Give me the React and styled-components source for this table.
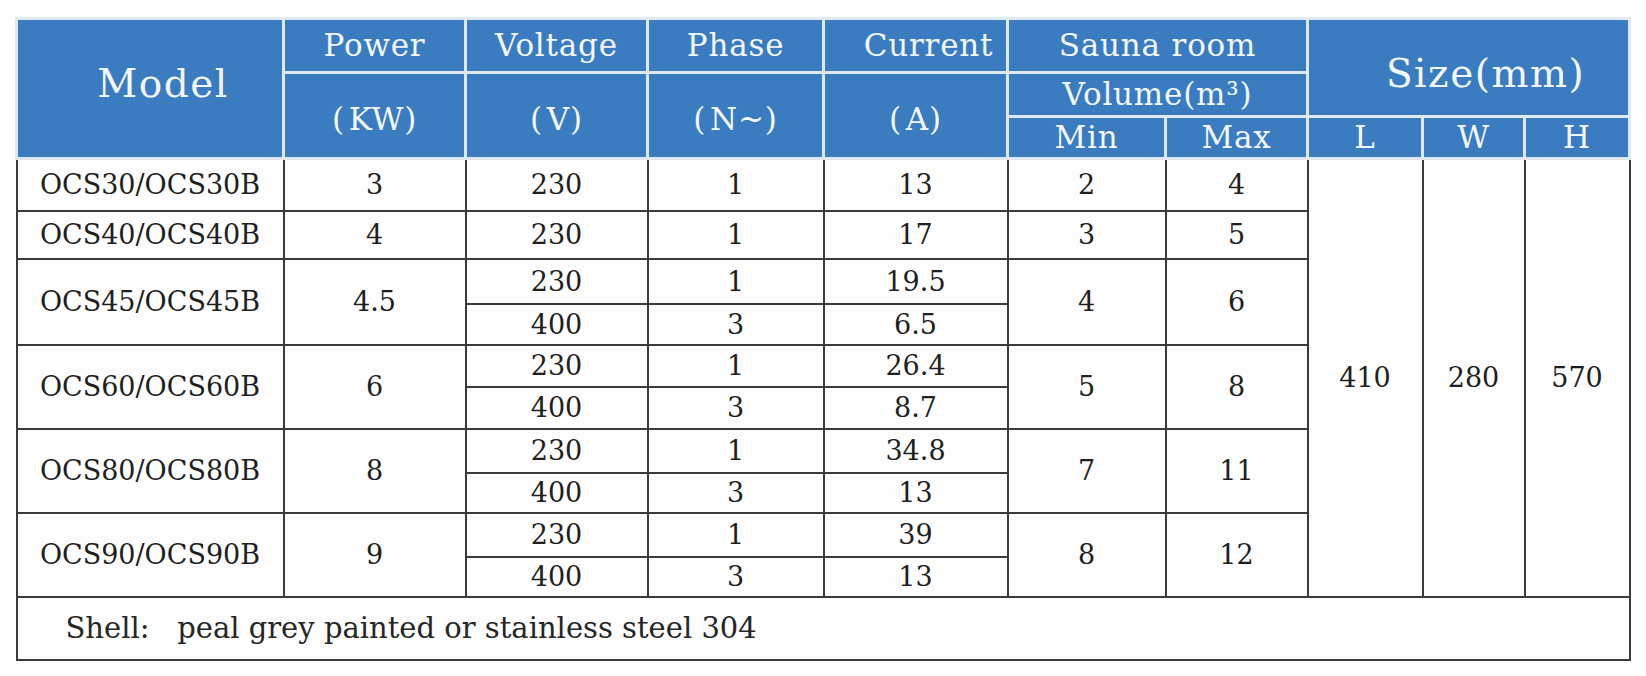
import React from 'react';
import styled, { createGlobalStyle } from 'styled-components';

const Global = createGlobalStyle`
  html, body { margin: 0; padding: 0; background: #ffffff; }
  body { font-family: "DejaVu Serif", "Liberation Serif", serif; }
`;

const Page = styled.main`
  padding: 17px 0 0 15px;
`;

const Table = styled.table`
  width: 1613px;
  table-layout: fixed;
  border-collapse: collapse;
  border: 2px solid #3d3d3d;
`;

const Col = styled.col`
  width: ${(p) => p.$w}px;
`;

const Row = styled.tr`
  height: ${(p) => p.$h}px;
`;

const Th = styled.th`
  background: #3b7bbf;
  color: #f2f7fc;
  border: 3px solid #dfe9f4;
  font-weight: normal;
  font-size: ${(p) => (p.$big ? 39 : 31)}px;
  letter-spacing: ${(p) => (p.$big ? 1.5 : 0.8)}px;
  line-height: 1;
  padding: ${(p) => p.$pad || '0'};
  text-align: center;
  white-space: nowrap;
`;

const Td = styled.td`
  border: 2px solid #3a3a3a;
  background: #fdfdfd;
  color: #1f1f1f;
  font-size: 27px;
  line-height: 1;
  padding: 0;
  text-align: center;
  white-space: nowrap;
`;

const NoteCell = styled.td`
  border: 2px solid #3a3a3a;
  background: #fdfdfd;
  color: #262626;
  font-size: 29px;
  line-height: 1;
  padding: 0 0 0 48px;
  text-align: left;
  white-space: pre;
`;

const widths = [267, 182, 182, 176, 184, 158, 142, 115, 102, 105];

const groups = [
  { model: 'OCS30/OCS30B', power: '3', lines: [['230', '1', '13']], min: '2', max: '4', h: [52] },
  { model: 'OCS40/OCS40B', power: '4', lines: [['230', '1', '17']], min: '3', max: '5', h: [48] },
  { model: 'OCS45/OCS45B', power: '4.5', lines: [['230', '1', '19.5'], ['400', '3', '6.5']], min: '4', max: '6', h: [45, 41] },
  { model: 'OCS60/OCS60B', power: '6', lines: [['230', '1', '26.4'], ['400', '3', '8.7']], min: '5', max: '8', h: [42, 42] },
  { model: 'OCS80/OCS80B', power: '8', lines: [['230', '1', '34.8'], ['400', '3', '13']], min: '7', max: '11', h: [44, 40] },
  { model: 'OCS90/OCS90B', power: '9', lines: [['230', '1', '39'], ['400', '3', '13']], min: '8', max: '12', h: [44, 40] },
];

const totalLines = groups.reduce((n, g) => n + g.lines.length, 0);

export default function App() {
  return (
    <Page>
      <Global />
      <Table>
        <colgroup>
          {widths.map((w, i) => (
            <Col key={i} $w={w} />
          ))}
        </colgroup>
        <thead>
          <Row $h={54}>
            <Th rowSpan={3} $big $pad="0 0 10px 26px">Model</Th>
            <Th>Power</Th>
            <Th>Voltage</Th>
            <Th>Phase</Th>
            <Th $pad="0 0 0 26px">Current</Th>
            <Th colSpan={2}>Sauna room</Th>
            <Th colSpan={3} rowSpan={2} $big $pad="12px 0 0 34px">Size(mm)</Th>
          </Row>
          <Row $h={44}>
            <Th rowSpan={2} $pad="8px 0 0 0">(&#8202;KW)</Th>
            <Th rowSpan={2} $pad="8px 0 0 0">(&#8202;V)</Th>
            <Th rowSpan={2} $pad="8px 0 0 0">(&#8202;N~)</Th>
            <Th rowSpan={2} $pad="8px 0 0 0">(&#8202;A)</Th>
            <Th colSpan={2}>Volume(m³)</Th>
          </Row>
          <Row $h={42}>
            <Th>Min</Th>
            <Th>Max</Th>
            <Th>L</Th>
            <Th>W</Th>
            <Th>H</Th>
          </Row>
        </thead>
        <tbody>
          {groups.map((g, gi) =>
            g.lines.map((line, li) => (
              <Row key={`${gi}-${li}`} $h={g.h[li]}>
                {li === 0 && <Td rowSpan={g.lines.length}>{g.model}</Td>}
                {li === 0 && <Td rowSpan={g.lines.length}>{g.power}</Td>}
                {line.map((v, vi) => (
                  <Td key={vi}>{v}</Td>
                ))}
                {li === 0 && <Td rowSpan={g.lines.length}>{g.min}</Td>}
                {li === 0 && <Td rowSpan={g.lines.length}>{g.max}</Td>}
                {gi === 0 && li === 0 && (
                  <>
                    <Td rowSpan={totalLines}>410</Td>
                    <Td rowSpan={totalLines}>280</Td>
                    <Td rowSpan={totalLines}>570</Td>
                  </>
                )}
              </Row>
            ))
          )}
          <Row $h={63}>
            <NoteCell colSpan={10}>{'Shell:   peal grey painted or stainless steel 304'}</NoteCell>
          </Row>
        </tbody>
      </Table>
    </Page>
  );
}
